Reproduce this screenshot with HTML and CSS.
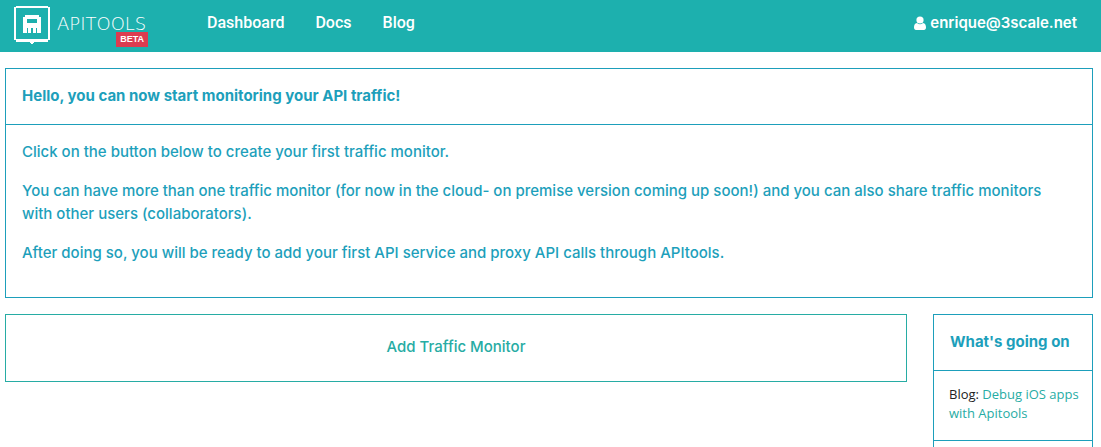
FILE: index.html
```html
<!DOCTYPE html>
<html lang="en">
<head>
<meta charset="utf-8">
<meta name="viewport" content="width=device-width, initial-scale=1">
<title>APItools</title>
<link rel="stylesheet" href="styles.css">
</head>
<body>
<header class="topbar">
  <a class="brand" href="#">
    <svg class="brand-icon" viewBox="0 0 36 39" aria-hidden="true">
      <path fill="#fff" fill-rule="evenodd" d="M2 0H34V1H36V34H34V35H2V34H0V1H2ZM2 2V33H34V2Z"/>
      <path fill="#fff" d="M2 35H34V36H20V37H19V38H17V37H16V36H2Z"/>
      <path fill="#fff" fill-rule="evenodd" d="M11 9H25V11H27V27H23V22H22V27H19V22H17V27H14V22H13V27H9V11H11ZM13 13V17H23V13Z"/>
    </svg>
    <span class="brand-name">APITOOLS</span>
    <span class="badge">BETA</span>
  </a>
  <nav class="nav">
    <a href="#">Dashboard</a>
    <a href="#">Docs</a>
    <a href="#">Blog</a>
  </nav>
  <a class="user" href="#">
    <svg class="user-icon" viewBox="0 0 12 14" aria-hidden="true">
      <circle cx="6" cy="4" r="3.6" fill="#fff"/>
      <path fill="#fff" d="M3 7C4.700 8.700 7.300 8.700 9 7C11.300 7.200 12 9.300 12 11.500C12 13 11.200 14 10 14H2C.8 14 0 13 0 11.500C0 9.300.7 7.200 3 7Z"/>
    </svg>
    <span>enrique@3scale.net</span>
  </a>
</header>
<main class="page">
  <section class="panel">
    <h1 class="panel-title">Hello, you can now start monitoring your API traffic!</h1>
    <div class="panel-body">
      <p>Click on the button below to create your first traffic monitor.</p>
      <p>You can have more than one traffic monitor (for now in the cloud- on premise version coming up soon!) and you can also share traffic monitors with other users (collaborators).</p>
      <p>After doing so, you will be ready to add your first API service and proxy API calls through APItools.</p>
    </div>
  </section>
  <div class="columns">
    <button class="add" type="button">Add Traffic Monitor</button>
    <aside class="panel news">
      <h2 class="panel-title">What's going on</h2>
      <p class="news-item">Blog: <a href="#">Debug iOS apps with Apitools</a></p>
    </aside>
  </div>
</main>
</body>
</html>
```
FILE: styles.css
```css
* { box-sizing: border-box; }
html { height: 100%; overflow: hidden; }
body {
  margin: 0;
  height: 100%;
  overflow: hidden;
  background: #fff;
  color: #1d9fbb;
  font: 500 15px/23px Inter, "Liberation Sans", sans-serif;
}
a { text-decoration: none; }
.topbar {
  display: flex;
  align-items: flex-start;
  height: 52px;
  padding: 6px 24px 0 14px;
  background: #1db0ae;
  font-weight: 600;
}
.topbar a { color: #fff; }
.brand {
  position: relative;
  display: flex;
  gap: 7px;
  width: 134px;
  height: 41px;
}
.brand-icon { flex: none; width: 36px; height: 39px; }
.brand-name {
  padding-top: 7px;
  font: 200 18px/22px "DejaVu Sans", sans-serif;
}
.badge {
  position: absolute;
  right: 0;
  bottom: 0;
  padding: 0 4px;
  background: #dc3c50;
  font: bold 9px/15px "Liberation Sans", sans-serif;
}
.nav {
  display: flex;
  gap: 31px;
  margin-left: 59px;
  padding-top: 5px;
  font: 500 16px/23px Roboto, "Liberation Sans", sans-serif;
}
.user {
  display: flex;
  align-items: center;
  gap: 4px;
  margin-left: auto;
  padding-top: 5px;
}
.user-icon { width: 12px; height: 14px; }
.page { padding: 16px 8px 0 5px; }
.panel { border: 1px solid #1d9fbb; }
.panel-title {
  margin: 0;
  padding: 15px 16px 17px;
  border-bottom: 1px solid #1d9fbb;
  font-size: 15px;
  line-height: 23px;
  font-weight: 700;
}
.panel-body { padding: 15px 32px 33px 16px; }
.panel-body p { margin: 0 0 16px; }
.panel-body p:last-child { margin: 0; }
.columns {
  display: flex;
  align-items: flex-start;
  gap: 26px;
  margin-top: 16px;
}
.add {
  flex: 1;
  padding: 20px 16px 23px;
  border: 1px solid #27aca4;
  background: #fff;
  color: #27aca4;
  font: inherit;
}
.news { width: 160px; padding-bottom: 16px; }
.news-item {
  margin: 0;
  padding: 14px 12px 17px 15px;
  border-bottom: 1px solid #1d9fbb;
  color: #222;
  font: 400 13px/19px "Open Sans", "Liberation Sans", sans-serif;
}
.news-item a { color: #27aca4; }
```
